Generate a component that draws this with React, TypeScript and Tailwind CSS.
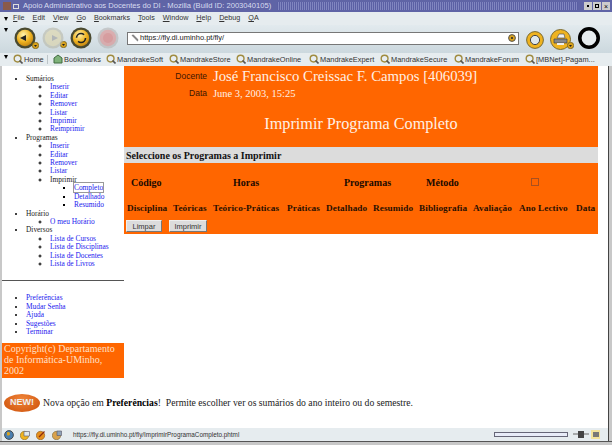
import { useId, type ReactNode } from "react";

const serif = "font-['Liberation_Serif',serif]";
const sans = "font-['Liberation_Sans',sans-serif]";

function NavButton({ fill, ring, dim, children }: { fill: string; ring: string; dim?: boolean; children: ReactNode }) {
  const id = useId();
  return (
    <svg width="22" height="22" viewBox="0 0 22 22" className={dim ? "opacity-60" : ""}>
      <defs>
        <radialGradient id={id} cx="0.4" cy="0.3" r="0.8">
          <stop offset="0" stopColor="#fff3b0" />
          <stop offset="0.55" stopColor={fill} />
          <stop offset="1" stopColor="#b87a10" />
        </radialGradient>
      </defs>
      <circle cx="11" cy="11" r="10.5" fill={ring} />
      <circle cx="11" cy="11" r="8.2" fill={dim ? fill : `url(#${id})`} />
      {children}
    </svg>
  );
}

function Dropmark() {
  return (
    <svg width="7" height="7" viewBox="0 0 7 7" className="-ml-[4px] mt-[14px]">
      <circle cx="3.5" cy="3.5" r="3.2" fill="#d9a21c" stroke="#6b5a20" strokeWidth="0.7" />
      <path d="M2 3h3L3.5 5z" fill="#222" />
    </svg>
  );
}

function BookmarkIcon() {
  return (
    <svg width="10" height="10" viewBox="0 0 10 10" className="shrink-0">
      <circle cx="4.6" cy="4.6" r="3.4" fill="#e8eef2" stroke="#a08c40" strokeWidth="1.4" />
      <path d="M6.5 6.5l3 3" stroke="#555" strokeWidth="1.6" />
    </svg>
  );
}

function Mark({ label, className, icon }: { label: string; className: string; icon?: ReactNode }) {
  return (
    <span className={`flex shrink-0 items-center gap-[1px] ${className}`}>
      {icon ?? <BookmarkIcon />}
      {label}
    </span>
  );
}

function Grip() {
  return <span className="h-0 w-0 border-x-[2px] border-t-[4px] border-x-transparent border-t-black" />;
}

function SubList({ items }: { items: string[] }) {
  return (
    <ul className="ml-[16px] list-[circle] pl-[8px] marker:text-[#333]">
      {items.map((t) => (
        <li key={t} className="text-[#1a1aee]">{t}</li>
      ))}
    </ul>
  );
}

function Group({ title, children }: { title: string; children: ReactNode }) {
  return (
    <li className="text-[#222]">
      {title}
      {children}
    </li>
  );
}

const row1 = [
  { t: "Código", c: "ml-[7px] w-[102px]" },
  { t: "Horas", c: "w-[111px]" },
  { t: "Programas", c: "w-[82px]" },
  { t: "Método", c: "w-[105px]" },
];

const row2: [string, string][] = [
  ["Disciplina", "ml-[3px] w-[46px]"],
  ["Teóricas", "w-[40px]"],
  ["Teórico-Práticas", "w-[74px]"],
  ["Práticas", "w-[39px]"],
  ["Detalhado", "w-[47px]"],
  ["Resumido", "w-[46px]"],
  ["Bibliografia", "w-[54px]"],
  ["Avaliação", "w-[46px]"],
  ["Ano Lectivo", "w-[57px]"],
  ["Data", "w-[20px]"],
];

export default function App() {
  return (
    <div className={`flex h-[445px] w-[612px] flex-col overflow-hidden bg-[#c8c8c8] ${sans}`}>
      {/* title bar */}
      <div className="flex h-[12px] shrink-0 items-center bg-[#5f64a6] pl-[3px] pr-[2px] text-[7.6px] text-[#d8dcf0]">
        <span className="mr-[2px] h-[8px] w-[8px] bg-[#8a5a4a]" />
        <span className="mr-[4px] h-[5px] w-[6px] border border-[#ddd]" />
        <span className="whitespace-nowrap">Apoio Administrativo aos Docentes do DI - Mozilla (Build ID: 2003040105)</span>
        <div className="mx-[6px] h-[8px] flex-1 bg-[repeating-linear-gradient(90deg,#5a5fa4_0_1px,#8085c0_1px_2px)]" />
        <div className="flex gap-[1px]">
          <span className="flex h-[8px] w-[8px] items-center justify-center bg-[#ccc]"><span className="h-[2px] w-[2px] bg-black" /></span>
          <span className="flex h-[8px] w-[8px] items-center justify-center bg-[#ccc]"><span className="h-[4px] w-[4px] border border-black" /></span>
          <span className="flex h-[8px] w-[8px] items-center justify-center bg-[#ccc] text-[7px] leading-none text-black">×</span>
        </div>
      </div>

      {/* menu bar */}
      <div className="flex h-[13px] shrink-0 items-center bg-[#e6ecef] pl-[4px] text-[7.2px] text-[#333]">
        <Grip />
        <div className="ml-[5px] flex gap-[8px] whitespace-nowrap">
          {["File", "Edit", "View", "Go", "Bookmarks", "Tools", "Window", "Help", "Debug", "QA"].map((m) => (
            <span key={m}><span className="underline">{m[0]}</span>{m.slice(1)}</span>
          ))}
        </div>
      </div>

      {/* navigation toolbar */}
      <div className="flex h-[28px] shrink-0 items-center bg-gradient-to-b from-[#e2eaee] to-[#ccd8de] pb-[2px] pl-[4px]">
        <span className="mb-[16px] mr-[6px] flex"><Grip /></span>
        <NavButton fill="#efb320" ring="#4a4a30">
          <path d="M6 11l6-3v6z" fill="#222" />
        </NavButton>
        <Dropmark />
        <div className="ml-[3px] flex">
          <NavButton fill="#dcd3a6" ring="#b8b8a8" dim>
            <path d="M16 11l-6-3v6z" fill="#999" />
          </NavButton>
          <Dropmark />
        </div>
        <div className="ml-[3px]">
          <NavButton fill="#efb320" ring="#4a4a30">
            <circle cx="11" cy="11" r="4.5" fill="none" stroke="#222" strokeWidth="1.6" strokeDasharray="10 4" />
          </NavButton>
        </div>
        <div className="ml-[5px]">
          <NavButton fill="#d98a8a" ring="#b5b5b5" dim>
            <circle cx="11" cy="11" r="5" fill="#d67070" />
          </NavButton>
        </div>
        <div className="ml-[8px] flex h-[13px] w-[392px] items-center justify-between border border-[#777] bg-white pl-[3px] pr-[2px] text-[7.5px] text-[#222]">
          <span className="flex items-center gap-[1px]">
            <svg width="8" height="8" viewBox="0 0 8 8"><path d="M1 1l6 6M2 1l5 5" stroke="#888" strokeWidth="1.2" /></svg>
            https://fly.di.uminho.pt/fly/
          </span>
          <svg width="8" height="8" viewBox="0 0 8 8"><circle cx="4" cy="4" r="3.4" fill="#d9a21c" stroke="#555" /><circle cx="4" cy="4" r="1" fill="#222" /></svg>
        </div>
        <svg width="18" height="18" viewBox="0 0 18 18" className="ml-[7px] mt-[3px]">
          <circle cx="9" cy="9" r="8.4" fill="#efb320" stroke="#7a6a30" />
          <circle cx="9" cy="9" r="4.6" fill="#dfe8ec" stroke="#444" />
        </svg>
        <svg width="21" height="21" viewBox="0 0 21 21" className="ml-[6px] mt-[3px]">
          <circle cx="10.5" cy="10.5" r="10" fill="#efb320" stroke="#7a6a30" />
          <path d="M7 9l2-4h5l1 4z" fill="#f2f2f2" stroke="#555" strokeWidth="0.7" />
          <path d="M4 10h13v4H4z" fill="#888" stroke="#444" strokeWidth="0.7" />
          <path d="M7 14h7v2H7z" fill="#eee" />
        </svg>
        <Dropmark />
        <svg width="24" height="24" viewBox="0 0 24 24" className="ml-[3px]">
          <circle cx="12" cy="12" r="9.2" fill="#e6ecef" stroke="#000" strokeWidth="3.6" />
        </svg>
      </div>

      {/* bookmarks toolbar */}
      <div className="flex h-[13px] shrink-0 items-center whitespace-nowrap bg-[#e6ecef] pl-[4px] text-[7.4px] text-[#333]">
        <span className="mb-[5px] mr-[5px] flex"><Grip /></span>
        <Mark label="Home" className="w-[34px]" />
        <span className="mr-[5px] h-[9px] w-[1px] bg-[#bcc4c8]" />
        <Mark
          label="Bookmarks"
          className="w-[53px]"
          icon={
            <svg width="10" height="10" viewBox="0 0 10 10" className="shrink-0">
              <path d="M1 4l4-3 4 3v5H1z" fill="#7fb27a" stroke="#3f6a3f" />
            </svg>
          }
        />
        <Mark label="MandrakeSoft" className="w-[63px]" />
        <Mark label="MandrakeStore" className="w-[67px]" />
        <Mark label="MandrakeOnline" className="w-[73px]" />
        <Mark label="MandrakeExpert" className="w-[71px]" />
        <Mark label="MandrakeSecure" className="w-[74px]" />
        <Mark label="MandrakeForum" className="w-[71px]" />
        <Mark label="[MBNet]-Pagam..." className="" />
      </div>

      {/* page */}
      <div className={`ml-[2px] mr-[3px] flex min-h-0 flex-1 flex-col border-r border-r-[#444] bg-white ${serif}`}>
        <div className="flex h-[322px] shrink-0">
          <aside className="w-[122px] shrink-0 text-[7.4px] leading-[8.4px]">
            <ul className="ml-[8px] mt-[9px] list-disc pl-[16px] marker:text-black">
              <Group title="Sumários">
                <SubList items={["Inserir", "Editar", "Remover", "Listar", "Imprimir", "Reimprimir"]} />
              </Group>
              <Group title="Programas">
                <SubList items={["Inserir", "Editar", "Remover", "Listar"]} />
                <ul className="ml-[16px] list-[circle] pl-[8px]">
                  <li>
                    Imprimir
                    <ul className="ml-[16px] list-[square] pl-[8px] text-[#1a1aee] marker:text-black">
                      <li><span className="outline outline-1 outline-[#999]">Completo</span></li>
                      <li>Detalhado</li>
                      <li>Resumido</li>
                    </ul>
                  </li>
                </ul>
              </Group>
              <Group title="Horário">
                <SubList items={["O meu Horário"]} />
              </Group>
              <Group title="Diversos">
                <SubList items={["Lista de Cursos", "Lista de Disciplinas", "Lista de Docentes", "Lista de Livros"]} />
              </Group>
            </ul>
            <div className="mt-[12px] h-[1px] bg-[#555]" />
            <ul className="ml-[8px] mt-[13px] list-disc pl-[16px] text-[#1a1aee] marker:text-black">
              {["Preferências", "Mudar Senha", "Ajuda", "Sugestões", "Terminar"].map((t) => (
                <li key={t}>{t}</li>
              ))}
            </ul>
            <div className="mt-[7px] h-[35px] w-[122px] bg-[#ff6600] pl-[2px] pt-[1px] text-[10px] leading-[10.6px] text-[#ffe0c8]">
              Copyright(c) Departamento<br />de Informática-UMinho,<br />2002
            </div>
          </aside>

          <main className="h-[168px] w-[474px] shrink-0 bg-[#ff6600]">
            <div className="flex h-[20px] items-center">
              <span className={`w-[84px] pr-[1px] text-right text-[8.5px] text-[#3a1500] ${sans}`}>Docente</span>
              <span className="ml-[5px] whitespace-nowrap text-[14.75px] text-[#fff0e4]">José Francisco Creissac F. Campos [406039]</span>
            </div>
            <div className="flex h-[15px] items-center">
              <span className={`w-[84px] pr-[1px] text-right text-[8.5px] text-[#3a1500] ${sans}`}>Data</span>
              <span className="ml-[5px] text-[10.5px] text-[#fff0e4]">June 3, 2003, 15:25</span>
            </div>
            <div className="mt-[13px] h-[20px] text-center text-[16.2px] leading-[20px] text-[#fff0e4]">Imprimir Programa Completo</div>
            <div className="mt-[13px] flex h-[16px] items-center bg-[#dcdcdc] pl-[2px] text-[10px] font-bold text-[#111]">
              Seleccione os Programas a Imprimir
            </div>
            <div className="mt-[12px] flex h-[14px] items-center text-[10px] font-bold text-[#1a0a00]">
              {row1.map((r) => (
                <span key={r.t} className={r.c}>{r.t}</span>
              ))}
              <span className="h-[8px] w-[8px] border border-[#a85020]" />
            </div>
            <div className="mt-[13px] flex h-[14px] items-center whitespace-nowrap text-[9.2px] font-bold tracking-[0.1px] text-[#2a1000]">
              {row2.map(([t, c]) => (
                <span key={t} className={c}>{t}</span>
              ))}
            </div>
            <div className={`mt-[4px] flex gap-[7px] pl-[2px] text-[7.5px] text-[#333] ${sans}`}>
              <button className="h-[12px] w-[36px] border border-[#eee] border-b-[#777] border-r-[#777] bg-[#dcdcdc]">Limpar</button>
              <button className="h-[12px] w-[38px] border border-[#eee] border-b-[#777] border-r-[#777] bg-[#dcdcdc]">Imprimir</button>
            </div>
          </main>
        </div>

        {/* news line */}
        <div className="mt-[6px] flex items-center pl-[2px] text-[9.7px] text-[#222]">
          <span className={`flex h-[18px] w-[36px] items-center justify-center rounded-[50%] bg-[radial-gradient(ellipse_at_50%_30%,#f0853a,#cc4f08)] text-[9px] font-bold text-[#eee] ${sans}`}>NEW!</span>
          <span className="ml-[3px] whitespace-pre">Nova opção em <b className="text-black">Preferências</b>!  Permite escolher ver os sumários do ano inteiro ou do semestre.</span>
        </div>
        <div className="flex-1" />

        {/* status bar */}
        <div className={`flex h-[13px] shrink-0 items-center bg-[#e6ecef] text-[6.35px] text-[#333] ${sans}`}>
          <div className="ml-[2px] flex w-[69px] shrink-0 gap-[6px]">
            <svg width="10" height="10" viewBox="0 0 10 10">
              <circle cx="5" cy="5" r="4.4" fill="#4a7fb0" stroke="#333" strokeWidth="0.8" />
              <path d="M3 2.5c2-1 3 0 3 1.5S4 6 3 5z" fill="#d9a21c" />
            </svg>
            <svg width="10" height="10" viewBox="0 0 10 10">
              <circle cx="4.5" cy="5.5" r="4.2" fill="#efb320" stroke="#8a6a20" strokeWidth="0.6" />
              <path d="M4 1.5h5.5v4.5H4z" fill="#dfe8ec" stroke="#667" strokeWidth="0.7" />
            </svg>
            <svg width="10" height="10" viewBox="0 0 10 10">
              <circle cx="4.5" cy="5.5" r="4.2" fill="#e6901c" stroke="#8a5a20" strokeWidth="0.6" />
              <path d="M3 7l5.5-5.5" stroke="#8a2a10" strokeWidth="1.3" />
            </svg>
            <svg width="10" height="10" viewBox="0 0 10 10">
              <circle cx="4.5" cy="5.5" r="4.2" fill="#d9a24c" stroke="#7a6a40" strokeWidth="0.6" />
              <path d="M5 1h4.5v4.5H5z" fill="#8fa3b8" stroke="#556" strokeWidth="0.6" />
            </svg>
          </div>
          <span className="whitespace-nowrap">https://fly.di.uminho.pt/fly/ImprimirProgramaCompleto.phtml</span>
          <div className="flex-1" />
          <span className="h-[5px] w-[74px] border border-[#667] bg-[#e8ecf8]" />
          <svg width="16" height="7" viewBox="0 0 16 7" className="ml-[5px]"><path d="M0 3h5M11 3h5" stroke="#666" /><rect x="5" y="0" width="6" height="7" fill="#444" /></svg>
          <span className="ml-[2px] mr-[8px] flex h-[9px] w-[9px] items-center justify-center bg-[#f2e29a]"><span className="h-[5px] w-[6px] bg-[#777]" /></span>
        </div>
      </div>
      <div className="h-[4px] shrink-0 border-t border-[#555] bg-[#c8c8c8]" />
    </div>
  );
}
